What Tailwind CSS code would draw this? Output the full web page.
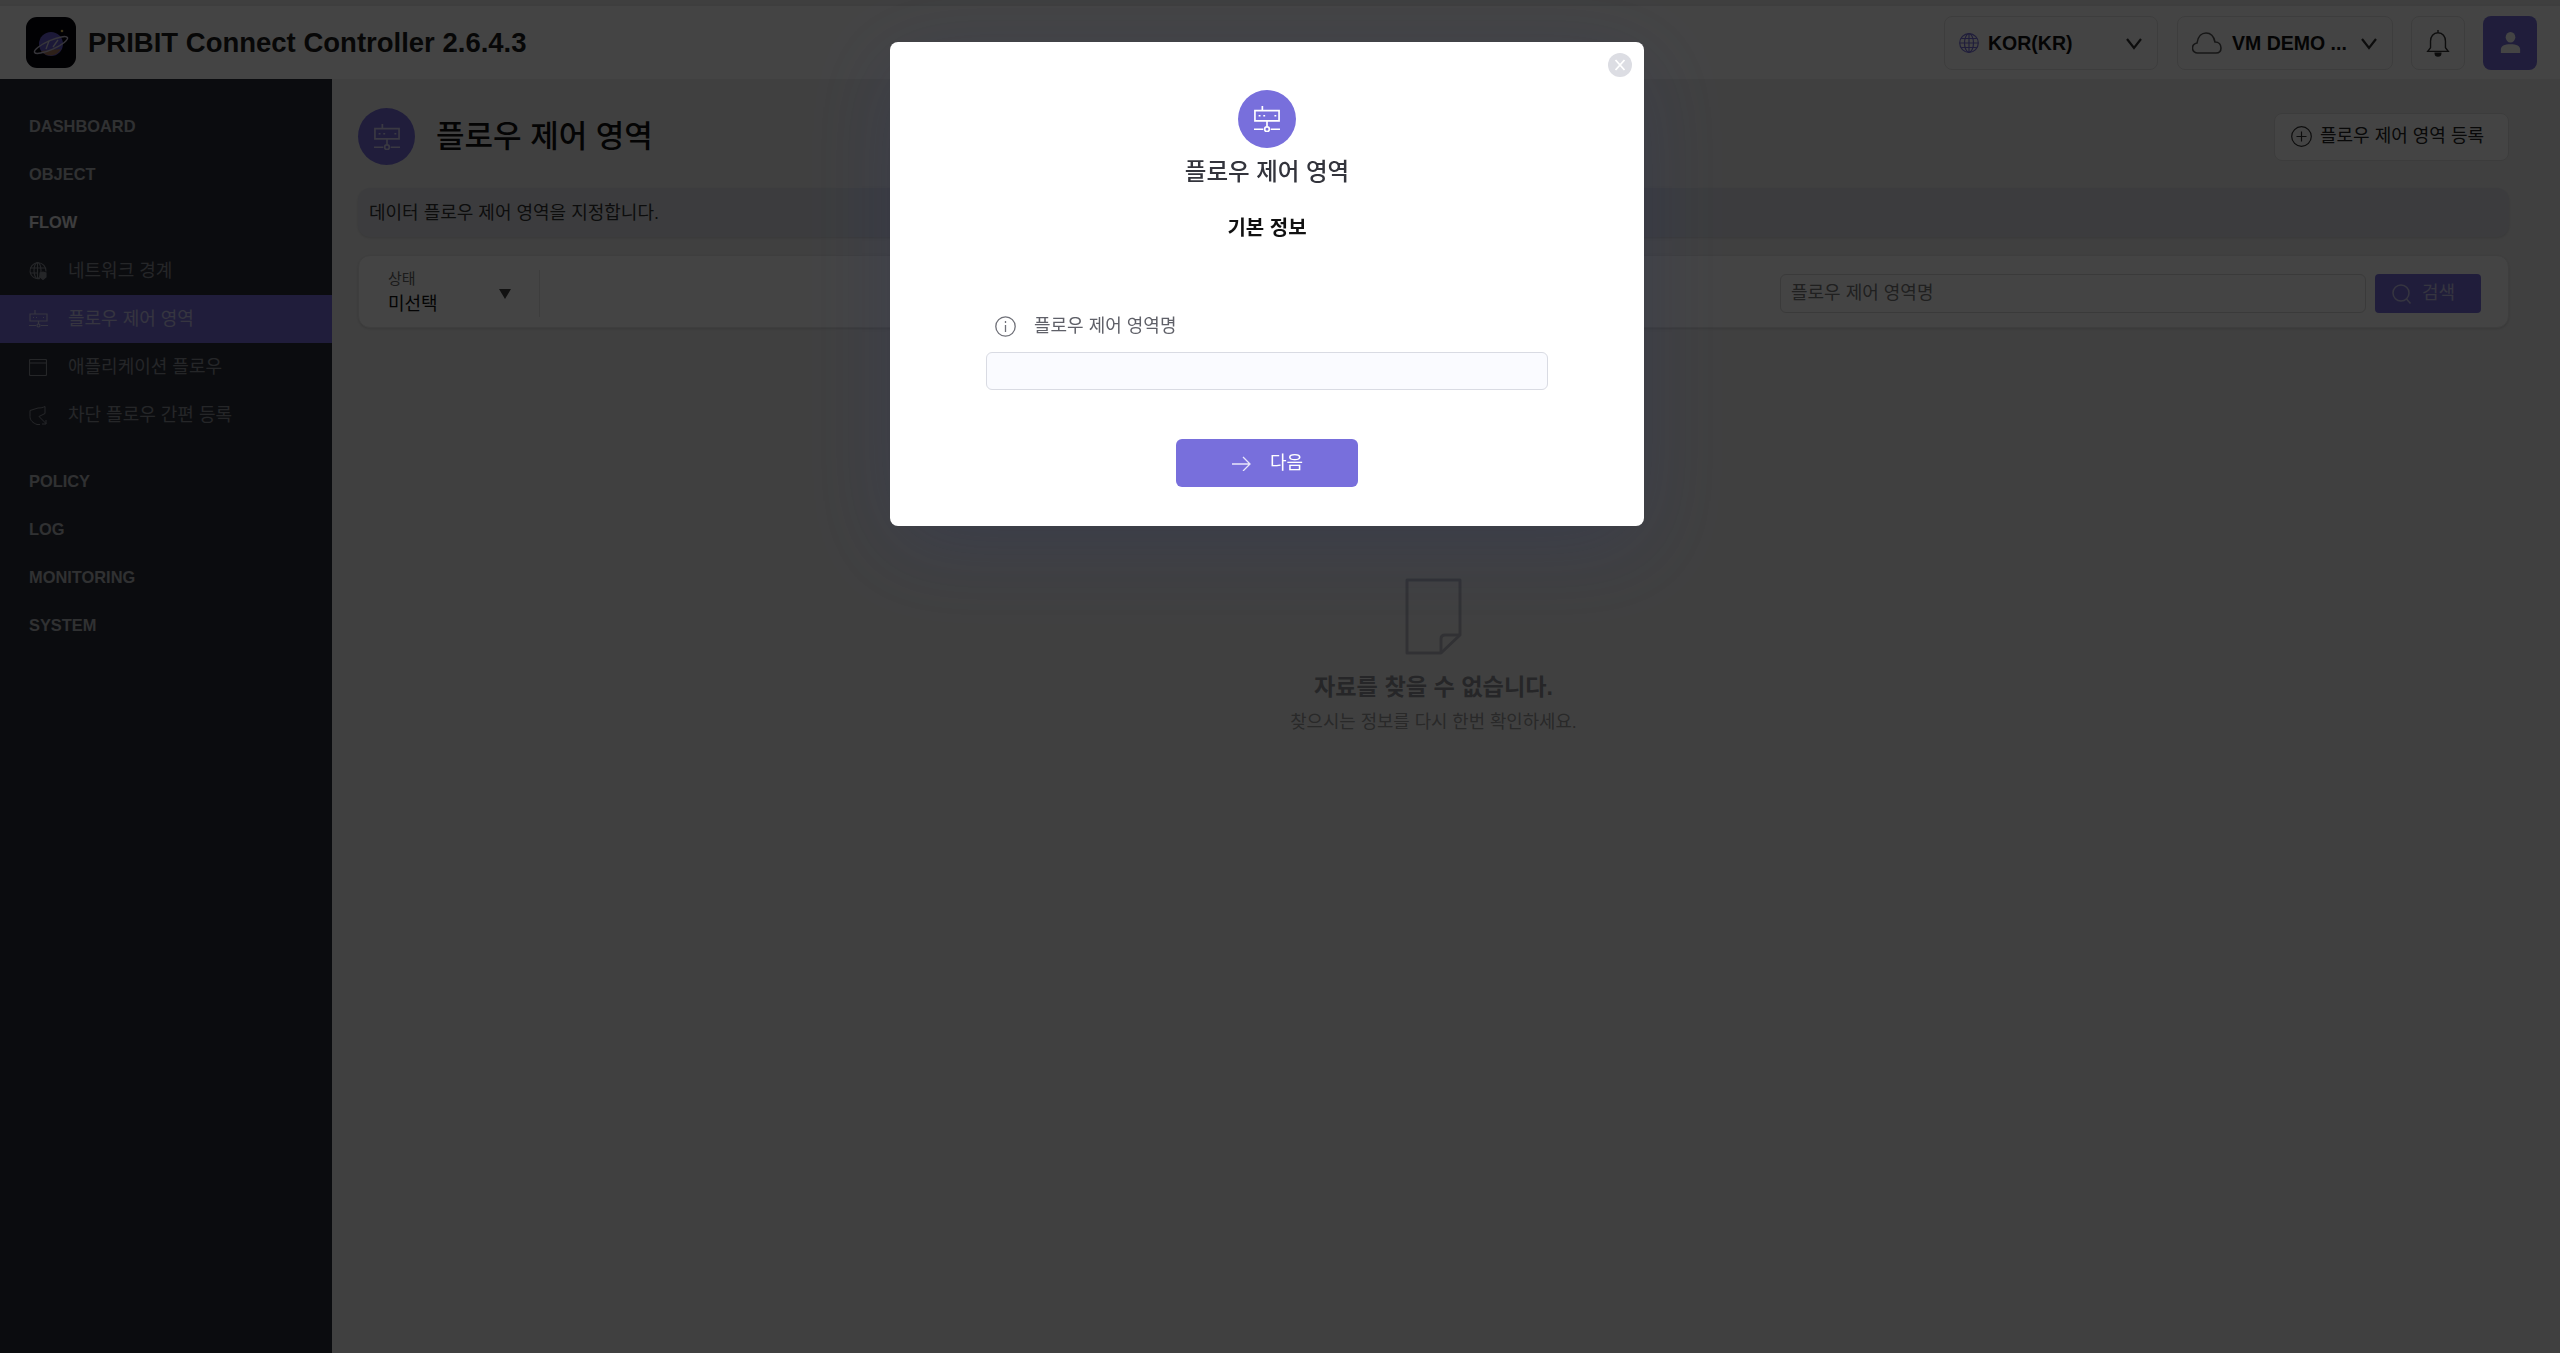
<!DOCTYPE html>
<html lang="ko">

<head>
  <meta charset="UTF-8">
  <meta name="viewport" content="width=device-width, initial-scale=1.0">
  <title>PRIBIT Connect Controller</title>
  <script src="https://cdn.jsdelivr.net/npm/@tailwindcss/browser@4"></script>
</head>

<body class="h-[1353px] overflow-hidden bg-[#f0f0f0] font-['Liberation_Sans','Noto_Sans_CJK_KR',sans-serif] text-[#111]">

  <!-- Top strip -->
  <div class="h-[6px] border-b-2 border-[#e8e8e8] bg-[#ececec]"></div>

  <!-- Header -->
  <header class="flex h-[73px] items-center bg-white pl-[26px] pr-[23px]">
    <svg class="h-[51px] w-[50px] shrink-0" viewBox="0 0 50 51">
      <rect width="50" height="51" rx="11" fill="#05040c" />
      <circle cx="25" cy="27" r="12" fill="#6a5fd0" />
      <path d="M15 34a12 12 0 0 0 20-2z" fill="#a9785f" />
      <ellipse cx="25" cy="28" rx="18" ry="4.500" transform="rotate(-24 25 28)" fill="none" stroke="#c9c6d8" stroke-width="1.500" />
      <path d="M20 32l3-8M27 30l5-7" stroke="#d8d6e6" stroke-width="1.300" fill="none" />
      <circle cx="36" cy="14" r="1.300" fill="#e8c75a" />
    </svg>
    <h1 class="ml-3 text-[27.5px] font-bold leading-none text-[#1b1b1b]">PRIBIT Connect Controller 2.6.4.3</h1>

    <div class="ml-auto flex items-center">
      <div class="flex h-[54px] w-[214px] items-center rounded-lg border border-[#e4e4e4] pl-[14px] pr-[14px]">
        <svg class="h-[20px] w-[20px]" viewBox="0 0 20 20" fill="none" stroke="#786fdc" stroke-width="1.200">
          <circle cx="10" cy="10" r="9.300" />
          <ellipse cx="10" cy="10" rx="4.500" ry="9.300" />
          <path d="M10 1v18M1 10h18M2.200 5.500h15.600M2.200 14.500h15.600" />
        </svg>
        <span class="ml-[9px] pt-[2px] text-[19.5px] font-bold leading-none">KOR(KR)</span>
        <svg class="ml-auto h-[18px] w-[18px]" viewBox="0 0 18 18" fill="none" stroke="#333" stroke-width="2.200">
          <path d="M2 5l7 9 7-9" />
        </svg>
      </div>
      <div class="ml-[19px] flex h-[54px] w-[216px] items-center rounded-lg border border-[#e4e4e4] pl-[14px] pr-[14px]">
        <svg class="h-[22px] w-[30px]" viewBox="0 0 30 22" fill="none" stroke="#555" stroke-width="1.600">
          <path d="M6 21a5 5 0 0 1-1-10C6 4 10 1 14 1c5 0 8 4 9 9 4 0 6 3 6 6s-2 5-5 5z" />
        </svg>
        <span class="ml-[10px] whitespace-nowrap pt-[2px] text-[19.5px] font-bold leading-none">VM DEMO ...</span>
        <svg class="ml-auto h-[18px] w-[18px]" viewBox="0 0 18 18" fill="none" stroke="#333" stroke-width="2.200">
          <path d="M2 5l7 9 7-9" />
        </svg>
      </div>
      <div class="ml-[18px] flex h-[54px] w-[54px] items-center justify-center rounded-lg border border-[#e4e4e4]">
        <svg class="h-[28px] w-[24px]" viewBox="0 0 24 30" fill="none" stroke="#333" stroke-width="1.500">
          <path d="M12 1v3M12 4c-5 0-8 4-8 9v7l-3 4h22l-3-4v-7c0-5-3-9-8-9z" />
          <path d="M9 26a3 3 0 0 0 6 0z" fill="#333" />
        </svg>
      </div>
      <div class="ml-[18px] flex h-[54px] w-[54px] items-center justify-center rounded-lg bg-[#786fdc]">
        <svg class="h-[21px] w-[21px]" viewBox="0 0 24 24" fill="#fff">
          <ellipse cx="12" cy="6" rx="5.500" ry="6" />
          <path d="M1 24v-4c0-4 4-6 11-6s11 2 11 6v4z" />
        </svg>
      </div>
    </div>
  </header>

  <div class="flex h-[1274px]">
    <!-- Sidebar -->
    <nav class="w-[332px] shrink-0 bg-[#2c3039] pt-[24px] text-white">
      <div class="flex h-[48px] items-center pb-[2px] pl-[29px] text-[16.4px] font-bold text-[#b4b6bc]">DASHBOARD</div>
      <div class="flex h-[48px] items-center pb-[2px] pl-[29px] text-[16.4px] font-bold text-[#b4b6bc]">OBJECT</div>
      <div class="flex h-[48px] items-center pb-[2px] pl-[29px] text-[16.4px] font-bold text-[#e4e4e8]">FLOW</div>

      <div class="flex h-[48px] items-center pl-[29px] text-[18px] text-[#8b8e98]">
        <svg class="mr-[21px] h-[18px] w-[18px]" viewBox="0 0 18 18" fill="none" stroke="#8b8e98" stroke-width="1.100">
          <path d="M11 16.500a8 8 0 1 1 6-7" />
          <ellipse cx="8.500" cy="8.500" rx="3.500" ry="8" />
          <path d="M8.500 0.500v16M1 6h15M1 11h8" />
          <path d="M11 11l3-1 3 1v4l-3 2.500-3-2.500z" fill="#8b8e98" />
        </svg>
        <span>네트워크 경계</span>
      </div>
      <div class="flex h-[48px] items-center bg-[#786fdc] pl-[29px] text-[18px] text-[#c9c6ee]">
        <svg class="mr-[20px] h-[18px] w-[19px]" viewBox="0 0 19 18" fill="none" stroke="#c9c6ee" stroke-width="1.200">
          <path d="M6 0v4M1 4h17v7H1zM9.500 11v3M0 15.500h7M12 15.500h7" />
          <circle cx="9.500" cy="15.500" r="1.500" />
          <path d="M4 7.500h1M7 7.500h1M14 7.500h1" />
        </svg>
        <span>플로우 제어 영역</span>
      </div>
      <div class="flex h-[48px] items-center pl-[29px] text-[18px] text-[#8b8e98]">
        <svg class="mr-[21px] h-[17px] w-[18px]" viewBox="0 0 18 17" fill="none" stroke="#8b8e98" stroke-width="1.100">
          <rect x="0.500" y="0.500" width="17" height="16" rx="1" />
          <path d="M0.500 4h17" />
        </svg>
        <span>애플리케이션 플로우</span>
      </div>
      <div class="flex h-[48px] items-center pl-[29px] text-[18px] text-[#8b8e98]">
        <svg class="mr-[21px] h-[19px] w-[18px]" viewBox="0 0 18 19" fill="none" stroke="#8b8e98" stroke-width="1">
          <path d="M16 0.500c-2 1-4 1.500-7 1.500L1 4.500v6c0 4 3 6.500 7 8h3" />
          <path d="M16 0.500v7l-6 3 7 7M13 18h4v-4" />
        </svg>
        <span>차단 플로우 간편 등록</span>
      </div>

      <div class="mt-[19px] flex h-[48px] items-center pb-[2px] pl-[29px] text-[16.4px] font-bold text-[#b4b6bc]">POLICY</div>
      <div class="flex h-[48px] items-center pb-[2px] pl-[29px] text-[16.4px] font-bold text-[#b4b6bc]">LOG</div>
      <div class="flex h-[48px] items-center pb-[2px] pl-[29px] text-[16.4px] font-bold text-[#b4b6bc]">MONITORING</div>
      <div class="flex h-[48px] items-center pb-[2px] pl-[29px] text-[16.4px] font-bold text-[#b4b6bc]">SYSTEM</div>
    </nav>

    <!-- Main content -->
    <main class="min-w-0 flex-1 pl-[26px] pr-[51px] pt-[29px]">
      <div class="flex h-[57px] items-center">
        <div class="flex h-[57px] w-[57px] items-center justify-center rounded-full bg-[#786fdc]">
          <svg class="h-[26px] w-[28px]" viewBox="0 0 30 28" fill="none" stroke="#d8d5f5" stroke-width="1.800">
            <path d="M10 0v5M2 5h26v11H2zM15 16v6M1 25h10M19 25h10" />
            <circle cx="15" cy="25" r="2.500" />
            <path d="M6 10.500h2M11 10.500h2M23 10.500h2" />
          </svg>
        </div>
        <h2 class="ml-[21px] text-[31px] font-medium leading-none">플로우 제어 영역</h2>
        <button class="ml-auto flex h-[48px] w-[235px] items-center rounded-lg border border-[#e0e0e0] bg-white pl-[16px] text-[18px] text-[#222]">
          <svg class="mr-[8px] h-[21px] w-[21px]" viewBox="0 0 21 21" fill="none" stroke="#333" stroke-width="1.200">
            <circle cx="10.500" cy="10.500" r="9.800" />
            <path d="M10.500 5.500v10M5.500 10.500h10" />
          </svg>
          <span>플로우 제어 영역 등록</span>
        </button>
      </div>

      <div class="mt-[23px] flex h-[49px] items-center rounded-xl bg-[#dfe2e9] pl-[11px] pt-[2px] text-[18px] text-[#333] shadow-sm">데이터 플로우 제어 영역을 지정합니다.</div>

      <div class="mt-[18px] flex h-[73px] items-start rounded-xl border border-[#e8e8e8] bg-white pr-[27px] pt-[18px] shadow-sm">
        <div class="-mt-[4px] flex h-[47px] w-[181px] items-center border-r border-[#e4e4e4] pl-[29px] pr-[28px]">
          <div>
            <div class="text-[15px] leading-[18px] text-[#666]">상태</div>
            <div class="mt-[3px] text-[18px] leading-[26px] text-[#111]">미선택</div>
          </div>
          <svg class="ml-auto h-[10px] w-[12px]" viewBox="0 0 12 10" fill="#444">
            <path d="M0 0h12L6 10z" />
          </svg>
        </div>
        <div class="ml-auto flex h-[39px] w-[586px] items-center rounded-md border border-[#d8d8d8] pl-[10px] text-[18px] text-[#777]">플로우 제어 영역명</div>
        <button class="ml-[9px] flex h-[39px] w-[106px] items-center rounded-sm bg-[#786fdc] pl-[17px] text-[18px] text-[#c9c6ee]">
          <svg class="mr-[10px] h-[20px] w-[20px]" viewBox="0 0 20 20" fill="none" stroke="#c9c6ee" stroke-width="1.500">
            <circle cx="9" cy="9" r="8" />
            <path d="M14.500 15l4 4.500" />
          </svg>
          <span>검색</span>
        </button>
      </div>

      <!-- Empty state -->
      <div class="mt-[250px] flex flex-col items-center">
        <svg class="h-[77px] w-[57px]" viewBox="0 0 57 77" fill="none" stroke="#b8b9c2" stroke-width="3" stroke-linejoin="round">
          <path d="M36 75H2V2h53v55z" />
          <path d="M55 57H40q-4 0-4 4v14" />
        </svg>
        <p class="mt-[16px] text-[23.200px] font-bold leading-[32px] text-[#8f9096]">자료를 찾을 수 없습니다.</p>
        <p class="mt-[6px] text-[17.800px] leading-[26px] text-[#999]">찾으시는 정보를 다시 한번 확인하세요.</p>
      </div>
    </main>
  </div>

  <!-- Modal backdrop -->
  <div class="fixed inset-0 bg-black/[.735]">
    <div class="absolute left-[890px] top-[42px] flex h-[484px] w-[754px] flex-col items-center rounded-lg bg-white pt-[48px] shadow-[0_20px_90px_rgba(40,50,100,.28)]">
      <button class="absolute right-[12px] top-[11px] flex h-[24px] w-[24px] items-center justify-center rounded-full bg-[#dcdde3]">
        <svg class="h-[12px] w-[12px]" viewBox="0 0 12 12" fill="none" stroke="#fff" stroke-width="1.800">
          <path d="M1.500 1l9 10M10.500 1l-9 10" />
        </svg>
      </button>
      <div class="flex h-[58px] w-[58px] items-center justify-center rounded-full bg-[#786fdc]">
        <svg class="h-[26px] w-[28px]" viewBox="0 0 30 28" fill="none" stroke="#fff" stroke-width="1.800">
          <path d="M10 0v5M2 5h26v11H2zM15 16v6M1 25h10M19 25h10" />
          <circle cx="15" cy="25" r="2.500" />
          <path d="M6 10.500h2M11 10.500h2M23 10.500h2" />
        </svg>
      </div>
      <h3 class="mt-[7px] text-[23.500px] font-medium leading-[34px] text-[#33343c]">플로우 제어 영역</h3>
      <h4 class="mt-[25px] text-[20px] font-bold leading-[28px] text-[#111]">기본 정보</h4>

      <div class="mt-[71px] w-[562px]">
        <div class="flex items-center pl-[9px]">
          <svg class="mr-[18px] h-[21px] w-[21px]" viewBox="0 0 21 21" fill="none" stroke="#6f7078" stroke-width="1.300">
            <circle cx="10.500" cy="10.500" r="9.700" />
            <path d="M10.500 9v7M10.500 5v2" />
          </svg>
          <label class="text-[18px] leading-[26px] text-[#5f6068]">플로우 제어 영역명</label>
        </div>
        <div class="mt-[13px] h-[38px] rounded-md border border-[#d9dbe3] bg-[#fafbff]"></div>
      </div>

      <button class="mt-[49px] flex h-[48px] w-[182px] items-center rounded-md bg-[#786fdc] pl-[56px] text-[18px] text-white">
        <svg class="mr-[19px] h-[15px] w-[19px]" viewBox="0 0 19 15" fill="none" stroke="#e8e6fa" stroke-width="1.300">
          <path d="M0 8h18M11 1l7 7-7 7" />
        </svg>
        <span>다음</span>
      </button>
    </div>
  </div>

</body>

</html>
